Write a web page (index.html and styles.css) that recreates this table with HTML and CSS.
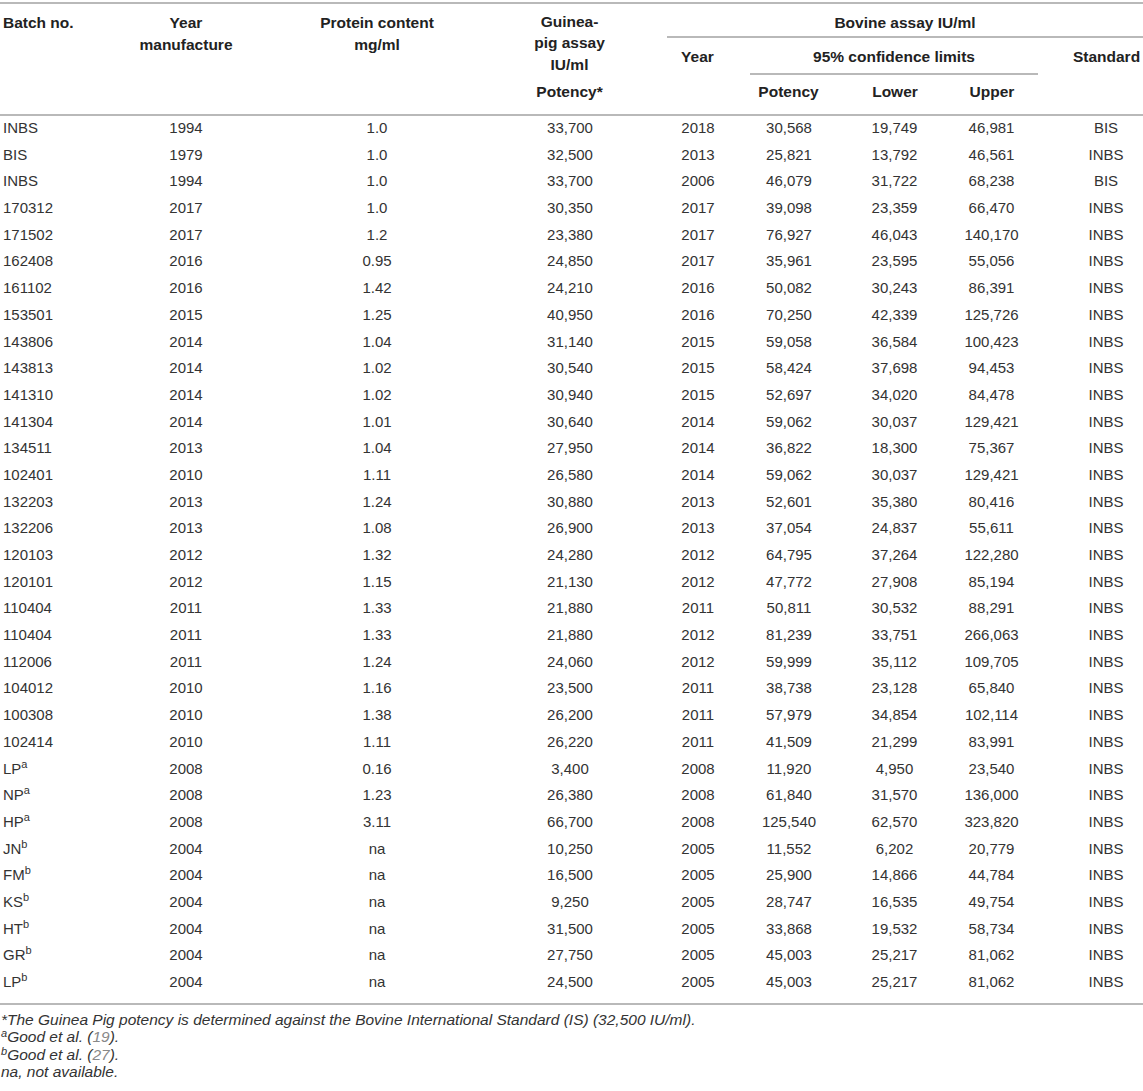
FILE: index.html
```html
<!DOCTYPE html>
<html>
<head>
<meta charset="utf-8">
<link rel="stylesheet" href="styles.css">
</head>
<body>
<table class="tbl">
<colgroup>
<col class="c1"><col class="c2"><col class="c3"><col class="c4"><col class="c5"><col class="c6"><col class="c7"><col class="c8"><col class="c9">
</colgroup>
<thead>
<tr class="ha">
<th rowspan="3" class="left top bb">Batch no.</th>
<th rowspan="3" class="top bb">Year<br>manufacture</th>
<th rowspan="3" class="top bb">Protein content<br>mg/ml</th>
<th rowspan="2" class="top gp">Guinea-<br>pig assay<br>IU/ml</th>
<th colspan="5" class="bov bb">Bovine assay IU/ml</th>
</tr>
<tr class="hb">
<th class="yr">Year</th>
<th colspan="3" class="ci bb">95% confidence limits</th>
<th class="std">Standard</th>
</tr>
<tr class="hc">
<th class="gpp bb">Potency*</th>
<th class="yr bb"></th>
<th class="pot bb">Potency</th>
<th class="low bb">Lower</th>
<th class="up bb">Upper</th>
<th class="std bb"></th>
</tr>
</thead>
<tbody>
<tr><td>INBS</td><td>1994</td><td>1.0</td><td class="gp">33,700</td><td class="yr">2018</td><td class="pot">30,568</td><td class="low">19,749</td><td class="up">46,981</td><td class="std">BIS</td></tr>
<tr><td>BIS</td><td>1979</td><td>1.0</td><td class="gp">32,500</td><td class="yr">2013</td><td class="pot">25,821</td><td class="low">13,792</td><td class="up">46,561</td><td class="std">INBS</td></tr>
<tr><td>INBS</td><td>1994</td><td>1.0</td><td class="gp">33,700</td><td class="yr">2006</td><td class="pot">46,079</td><td class="low">31,722</td><td class="up">68,238</td><td class="std">BIS</td></tr>
<tr><td>170312</td><td>2017</td><td>1.0</td><td class="gp">30,350</td><td class="yr">2017</td><td class="pot">39,098</td><td class="low">23,359</td><td class="up">66,470</td><td class="std">INBS</td></tr>
<tr><td>171502</td><td>2017</td><td>1.2</td><td class="gp">23,380</td><td class="yr">2017</td><td class="pot">76,927</td><td class="low">46,043</td><td class="up">140,170</td><td class="std">INBS</td></tr>
<tr><td>162408</td><td>2016</td><td>0.95</td><td class="gp">24,850</td><td class="yr">2017</td><td class="pot">35,961</td><td class="low">23,595</td><td class="up">55,056</td><td class="std">INBS</td></tr>
<tr><td>161102</td><td>2016</td><td>1.42</td><td class="gp">24,210</td><td class="yr">2016</td><td class="pot">50,082</td><td class="low">30,243</td><td class="up">86,391</td><td class="std">INBS</td></tr>
<tr><td>153501</td><td>2015</td><td>1.25</td><td class="gp">40,950</td><td class="yr">2016</td><td class="pot">70,250</td><td class="low">42,339</td><td class="up">125,726</td><td class="std">INBS</td></tr>
<tr><td>143806</td><td>2014</td><td>1.04</td><td class="gp">31,140</td><td class="yr">2015</td><td class="pot">59,058</td><td class="low">36,584</td><td class="up">100,423</td><td class="std">INBS</td></tr>
<tr><td>143813</td><td>2014</td><td>1.02</td><td class="gp">30,540</td><td class="yr">2015</td><td class="pot">58,424</td><td class="low">37,698</td><td class="up">94,453</td><td class="std">INBS</td></tr>
<tr><td>141310</td><td>2014</td><td>1.02</td><td class="gp">30,940</td><td class="yr">2015</td><td class="pot">52,697</td><td class="low">34,020</td><td class="up">84,478</td><td class="std">INBS</td></tr>
<tr><td>141304</td><td>2014</td><td>1.01</td><td class="gp">30,640</td><td class="yr">2014</td><td class="pot">59,062</td><td class="low">30,037</td><td class="up">129,421</td><td class="std">INBS</td></tr>
<tr><td>134511</td><td>2013</td><td>1.04</td><td class="gp">27,950</td><td class="yr">2014</td><td class="pot">36,822</td><td class="low">18,300</td><td class="up">75,367</td><td class="std">INBS</td></tr>
<tr><td>102401</td><td>2010</td><td>1.11</td><td class="gp">26,580</td><td class="yr">2014</td><td class="pot">59,062</td><td class="low">30,037</td><td class="up">129,421</td><td class="std">INBS</td></tr>
<tr><td>132203</td><td>2013</td><td>1.24</td><td class="gp">30,880</td><td class="yr">2013</td><td class="pot">52,601</td><td class="low">35,380</td><td class="up">80,416</td><td class="std">INBS</td></tr>
<tr><td>132206</td><td>2013</td><td>1.08</td><td class="gp">26,900</td><td class="yr">2013</td><td class="pot">37,054</td><td class="low">24,837</td><td class="up">55,611</td><td class="std">INBS</td></tr>
<tr><td>120103</td><td>2012</td><td>1.32</td><td class="gp">24,280</td><td class="yr">2012</td><td class="pot">64,795</td><td class="low">37,264</td><td class="up">122,280</td><td class="std">INBS</td></tr>
<tr><td>120101</td><td>2012</td><td>1.15</td><td class="gp">21,130</td><td class="yr">2012</td><td class="pot">47,772</td><td class="low">27,908</td><td class="up">85,194</td><td class="std">INBS</td></tr>
<tr><td>110404</td><td>2011</td><td>1.33</td><td class="gp">21,880</td><td class="yr">2011</td><td class="pot">50,811</td><td class="low">30,532</td><td class="up">88,291</td><td class="std">INBS</td></tr>
<tr><td>110404</td><td>2011</td><td>1.33</td><td class="gp">21,880</td><td class="yr">2012</td><td class="pot">81,239</td><td class="low">33,751</td><td class="up">266,063</td><td class="std">INBS</td></tr>
<tr><td>112006</td><td>2011</td><td>1.24</td><td class="gp">24,060</td><td class="yr">2012</td><td class="pot">59,999</td><td class="low">35,112</td><td class="up">109,705</td><td class="std">INBS</td></tr>
<tr><td>104012</td><td>2010</td><td>1.16</td><td class="gp">23,500</td><td class="yr">2011</td><td class="pot">38,738</td><td class="low">23,128</td><td class="up">65,840</td><td class="std">INBS</td></tr>
<tr><td>100308</td><td>2010</td><td>1.38</td><td class="gp">26,200</td><td class="yr">2011</td><td class="pot">57,979</td><td class="low">34,854</td><td class="up">102,114</td><td class="std">INBS</td></tr>
<tr><td>102414</td><td>2010</td><td>1.11</td><td class="gp">26,220</td><td class="yr">2011</td><td class="pot">41,509</td><td class="low">21,299</td><td class="up">83,991</td><td class="std">INBS</td></tr>
<tr><td>LP<sup>a</sup></td><td>2008</td><td>0.16</td><td class="gp">3,400</td><td class="yr">2008</td><td class="pot">11,920</td><td class="low">4,950</td><td class="up">23,540</td><td class="std">INBS</td></tr>
<tr><td>NP<sup>a</sup></td><td>2008</td><td>1.23</td><td class="gp">26,380</td><td class="yr">2008</td><td class="pot">61,840</td><td class="low">31,570</td><td class="up">136,000</td><td class="std">INBS</td></tr>
<tr><td>HP<sup>a</sup></td><td>2008</td><td>3.11</td><td class="gp">66,700</td><td class="yr">2008</td><td class="pot">125,540</td><td class="low">62,570</td><td class="up">323,820</td><td class="std">INBS</td></tr>
<tr><td>JN<sup>b</sup></td><td>2004</td><td>na</td><td class="gp">10,250</td><td class="yr">2005</td><td class="pot">11,552</td><td class="low">6,202</td><td class="up">20,779</td><td class="std">INBS</td></tr>
<tr><td>FM<sup>b</sup></td><td>2004</td><td>na</td><td class="gp">16,500</td><td class="yr">2005</td><td class="pot">25,900</td><td class="low">14,866</td><td class="up">44,784</td><td class="std">INBS</td></tr>
<tr><td>KS<sup>b</sup></td><td>2004</td><td>na</td><td class="gp">9,250</td><td class="yr">2005</td><td class="pot">28,747</td><td class="low">16,535</td><td class="up">49,754</td><td class="std">INBS</td></tr>
<tr><td>HT<sup>b</sup></td><td>2004</td><td>na</td><td class="gp">31,500</td><td class="yr">2005</td><td class="pot">33,868</td><td class="low">19,532</td><td class="up">58,734</td><td class="std">INBS</td></tr>
<tr><td>GR<sup>b</sup></td><td>2004</td><td>na</td><td class="gp">27,750</td><td class="yr">2005</td><td class="pot">45,003</td><td class="low">25,217</td><td class="up">81,062</td><td class="std">INBS</td></tr>
<tr class="last"><td>LP<sup>b</sup></td><td>2004</td><td>na</td><td class="gp">24,500</td><td class="yr">2005</td><td class="pot">45,003</td><td class="low">25,217</td><td class="up">81,062</td><td class="std">INBS</td></tr>
</tbody>
</table>
<div class="notes">
<p>*The Guinea Pig potency is determined against the Bovine International Standard (IS) (32,500 IU/ml).</p>
<p><sup>a</sup>Good et al. (<span class="ref">19</span>).</p>
<p><sup>b</sup>Good et al. (<span class="ref">27</span>).</p>
<p>na, not available.</p>
</div>
</body>
</html>
```

FILE: styles.css
```css
html, body {
  margin: 0;
  padding: 0;
  background: #fff;
}
body {
  width: 1143px;
  font-family: "Liberation Sans", Arial, sans-serif;
  color: #333;
}
.tbl {
  width: 1143px;
  margin-top: 2px;
  border-collapse: separate;
  border-spacing: 0;
  table-layout: fixed;
  border-top: 2px solid #b9b9b9;
  border-bottom: 2px solid #b9b9b9;
}
.c1 { width: 110px; }
.c2 { width: 152px; }
.c3 { width: 230px; }
.c4 { width: 175px; }
.c5 { width: 83px; }
.c6 { width: 91px; }
.c7 { width: 102px; }
.c8 { width: 95px; }
.c9 { width: 105px; }

th {
  font-weight: bold;
  font-size: 15.5px;
  line-height: 21.5px;
  color: #222;
  text-align: center;
  padding: 0;
  white-space: nowrap;
}
th.left, td:first-child {
  text-align: left;
  padding-left: 3px;
}
th.top { vertical-align: top; padding-top: 8px; }
th.gp { padding-top: 7px; padding-bottom: 0; line-height: 21.3px; }
.bb { border-bottom: 2px solid #b9b9b9; }

.ha th.bov { padding-top: 8px; padding-bottom: 2.5px; }
.hb th { padding-top: 8.25px; padding-bottom: 5.25px; vertical-align: top; }
.hc th { padding-top: 6.25px; padding-bottom: 11.25px; vertical-align: top; }

.gp { padding-right: 20px; }
.yr { padding-right: 22px; }
.pot { padding-right: 14px; }
.low { padding-left: 6px; }
.up { padding-left: 3px; }
.std { padding-left: 32px; }
th.gp, th.gpp { padding-right: 20px; }

td {
  font-size: 15px;
  line-height: 20px;
  padding-top: 2px;
  padding-bottom: 4.7px;
  text-align: center;
  white-space: nowrap;
  color: #333;
}
.last td { padding-bottom: 10.7px; }
td sup {
  font-size: 11px;
  line-height: 0;
  vertical-align: 6px;
}

.notes {
  padding-top: 6.5px;
  font-size: 15.5px;
  font-style: italic;
  line-height: 17.3px;
  color: #333;
}
.notes p { margin: 0; padding-left: 1px; }
.notes sup {
  font-size: 11px;
  line-height: 0;
  vertical-align: 5px;
}
.ref { color: #888; }
```
